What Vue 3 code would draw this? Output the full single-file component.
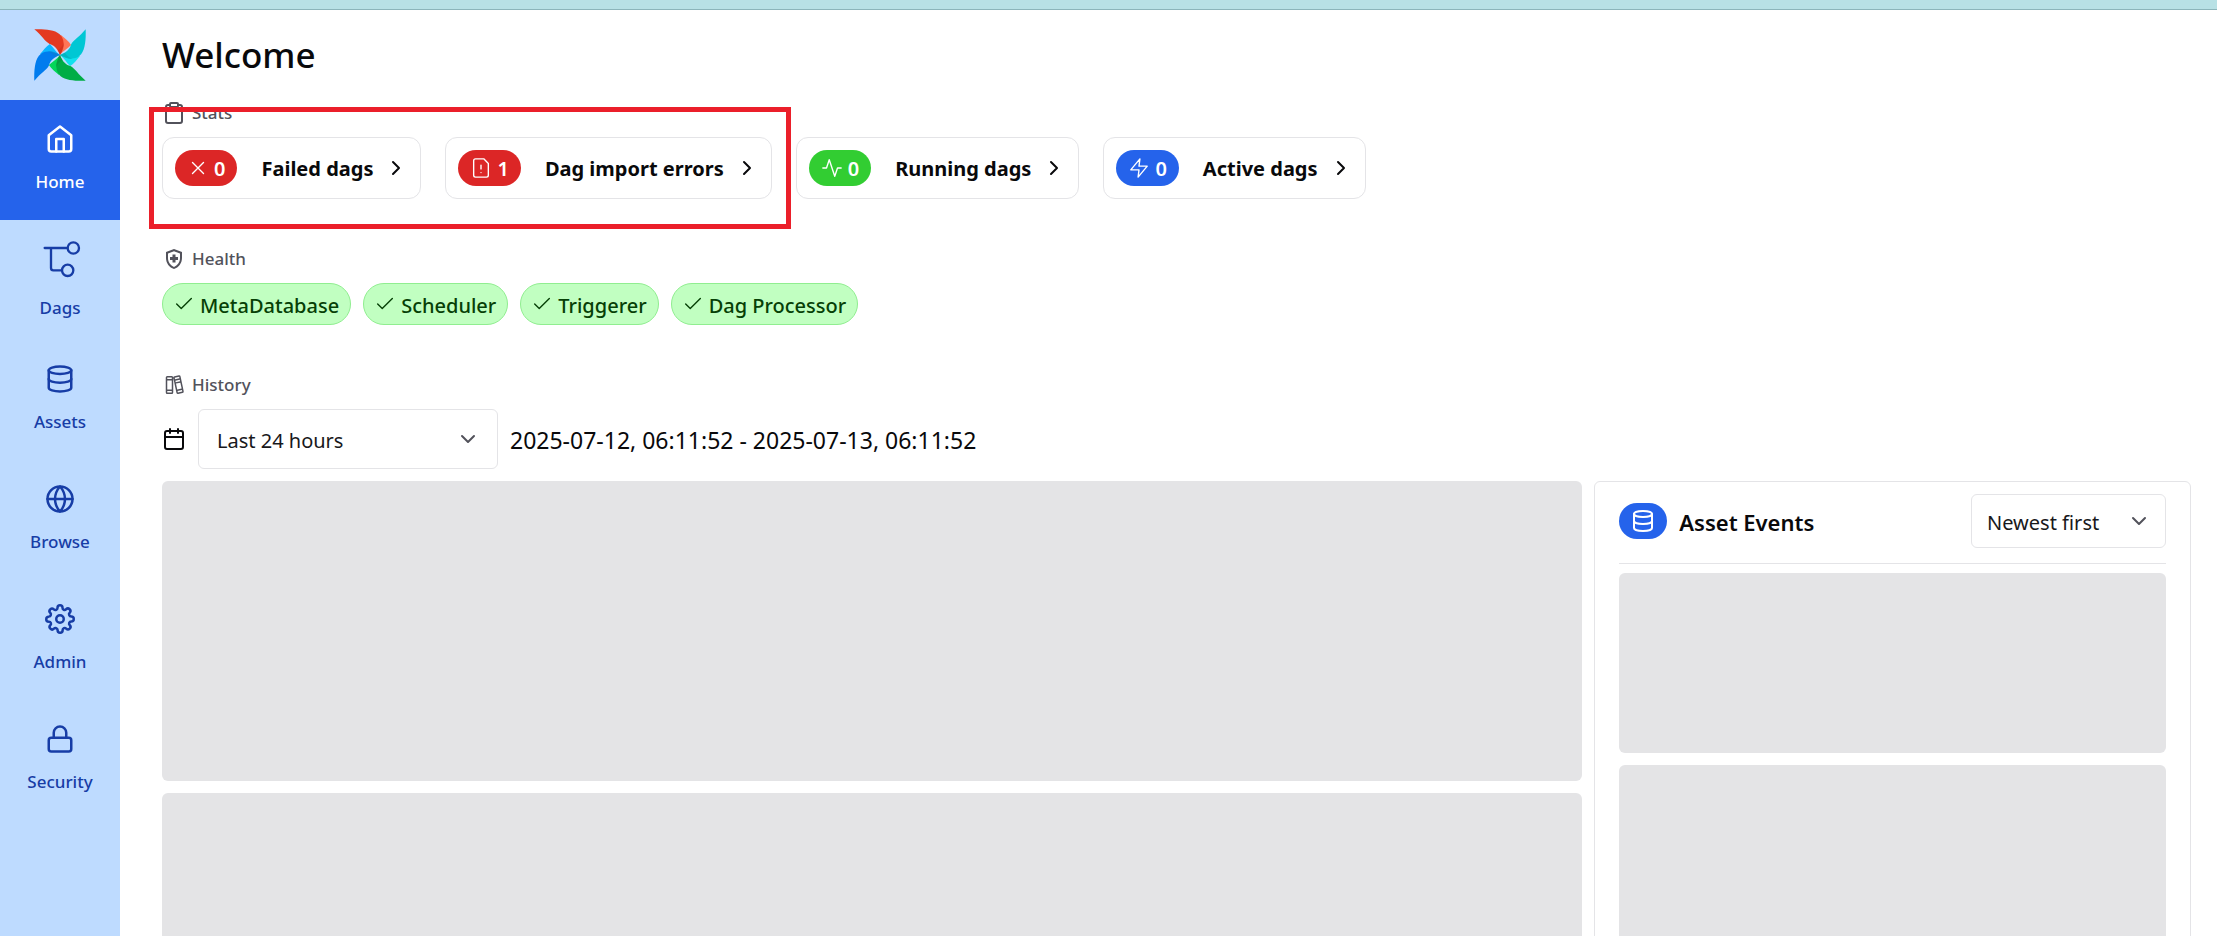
<script setup>
import { ref } from 'vue'

const icons = {
  home: '<path d="M3 9l9-7 9 7v11a2 2 0 0 1-2 2H5a2 2 0 0 1-2-2z"/><path d="M9 22V12h6v10"/>',
  database: '<ellipse cx="12" cy="5" rx="9" ry="3"/><path d="M21 12c0 1.66-4 3-9 3s-9-1.34-9-3"/><path d="M3 5v14c0 1.66 4 3 9 3s9-1.34 9-3V5"/>',
  globe: '<circle cx="12" cy="12" r="10"/><path d="M2 12h20"/><path d="M12 2a15.3 15.3 0 0 1 4 10 15.3 15.3 0 0 1-4 10 15.3 15.3 0 0 1-4-10 15.3 15.3 0 0 1 4-10z"/>',
  settings: '<circle cx="12" cy="12" r="3"/><path d="M19.4 15a1.65 1.65 0 0 0 .33 1.82l.06.06a2 2 0 0 1-2.83 2.83l-.06-.06a1.65 1.65 0 0 0-2.8 1.17V21a2 2 0 0 1-4 0v-.09A1.65 1.65 0 0 0 9 19.4a1.65 1.65 0 0 0-1.82.33l-.06.06a2 2 0 0 1-2.83-2.83l.06-.06a1.65 1.65 0 0 0-1.17-2.8H3a2 2 0 0 1 0-4h.09A1.65 1.65 0 0 0 4.6 9a1.65 1.65 0 0 0-.33-1.82l-.06-.06a2 2 0 0 1 2.83-2.83l.06.06A1.65 1.65 0 0 0 9 4.68a1.65 1.65 0 0 0 1-1.51V3a2 2 0 0 1 4 0v.09a1.65 1.65 0 0 0 2.82 1.17l.06-.06a2 2 0 0 1 2.83 2.83l-.06.06A1.65 1.65 0 0 0 19.4 9a1.65 1.65 0 0 0 1.51 1H21a2 2 0 0 1 0 4h-.09a1.65 1.65 0 0 0-1.51 1z"/>',
  lock: '<rect x="3" y="11" width="18" height="11" rx="2"/><path d="M7 11V7a5 5 0 0 1 10 0v4"/>',
  x: '<path d="M18 6L6 18M6 6l12 12"/>',
  fileWarning: '<path d="M15 2H6a2 2 0 0 0-2 2v16a2 2 0 0 0 2 2h12a2 2 0 0 0 2-2V7Z"/><path d="M12 9v4M12 17h.01"/>',
  activity: '<path d="M22 12h-4l-3 9L9 3l-3 9H2"/>',
  zap: '<path d="M13 2L3 14h9l-1 8 10-12h-9l1-8z"/>',
}

const dagsIcon = '<path d="M135 85H203M154 85V145Q154 152 161 152H187"/><circle cx="221" cy="85" r="17"/><circle cx="204" cy="152" r="17"/>'

const nav = [
  { label: 'Home', icon: 'home', active: true },
  { label: 'Dags', icon: 'dags' },
  { label: 'Assets', icon: 'database' },
  { label: 'Browse', icon: 'globe' },
  { label: 'Admin', icon: 'settings' },
  { label: 'Security', icon: 'lock' },
]

const statGroups = [
  {
    marked: true,
    items: [
      { label: 'Failed dags', count: 0, icon: 'x', tone: 'red' },
      { label: 'Dag import errors', count: 1, icon: 'fileWarning', tone: 'red' },
    ],
  },
  {
    marked: false,
    items: [
      { label: 'Running dags', count: 0, icon: 'activity', tone: 'green' },
      { label: 'Active dags', count: 0, icon: 'zap', tone: 'blue' },
    ],
  },
]

const health = ['MetaDatabase', 'Scheduler', 'Triggerer', 'Dag Processor']

const blades = [
  { turn: 0, main: '#e43921', light: '#ff7557', fold: '#c8301f' },
  { turn: 90, main: '#00c7d4', light: '#11e1ee', fold: '#05a5b0' },
  { turn: 180, main: '#00ad46', light: '#04d659', fold: '#0a8f3c' },
  { turn: 270, main: '#017cee', light: '#0cb6ff', fold: '#0d7fcd' },
]

const range = ref('Last 24 hours')
const order = ref('Newest first')
</script>

<template>
  <div class="page">
    <div class="strip"></div>
    <div class="shell">
      <nav class="sidebar" aria-label="Main">
        <a class="logo" href="#" aria-label="Airflow">
          <svg viewBox="0 0 160 160" width="52" height="52" aria-hidden="true">
            <g v-for="b in blades" :key="b.turn" :transform="`rotate(${b.turn} 80 80)`">
              <path :fill="b.light" d="M82 18C94 28 108 38 114 49C104 60 90 66 80 80Z" />
              <path :fill="b.main" d="M1 1C30 0 62 2 78 15C94 29 96 52 80 80C72 58 60 49 48 46C34 39 24 20 1 1Z" />
              <path :fill="b.fold" d="M92 42C93 55 88 67 80 80C78 74 76 69 73 65C82 60 88 51 92 42Z" opacity=".55" />
            </g>
          </svg>
        </a>
        <a
          v-for="item in nav"
          :key="item.label"
          href="#"
          class="nav-item"
          :class="{ active: item.active, branch: item.icon === 'dags' }"
        >
          <svg v-if="item.icon === 'dags'" class="dags-icon" viewBox="130 61 114 114" aria-hidden="true" v-html="dagsIcon"></svg>
          <svg v-else class="nav-icon" viewBox="0 0 24 24" aria-hidden="true" v-html="icons[item.icon]"></svg>
          <span>{{ item.label }}</span>
        </a>
      </nav>

      <main class="main">
        <h1>Welcome</h1>

        <section>
          <h2>
            <svg class="icon" viewBox="0 0 24 24" aria-hidden="true">
              <path d="M16 4h2a2 2 0 0 1 2 2v14a2 2 0 0 1-2 2H6a2 2 0 0 1-2-2V6a2 2 0 0 1 2-2h2" />
              <rect x="8" y="2" width="8" height="4" rx="1" />
            </svg>
            Stats
          </h2>
          <div class="stats">
            <div v-for="(group, i) in statGroups" :key="i" class="stat-group" :class="{ marked: group.marked }">
              <a v-for="s in group.items" :key="s.label" class="stat" href="#">
                <span class="badge" :class="s.tone">
                  <svg class="icon thin" viewBox="0 0 24 24" aria-hidden="true" v-html="icons[s.icon]"></svg>
                  {{ s.count }}
                </span>
                <span class="stat-label">{{ s.label }}</span>
                <svg class="icon" viewBox="0 0 24 24" aria-hidden="true"><path d="M9 18l6-6-6-6" /></svg>
              </a>
            </div>
          </div>
        </section>

        <section>
          <h2>
            <svg class="icon solid" viewBox="0 0 24 24" aria-hidden="true">
              <path d="M10.500 13H8v-3h2.500V7.500h3V10H16v3h-2.500v2.500h-3V13zM12 2 4 5v6.090c0 5.050 3.410 9.760 8 10.910 4.590-1.150 8-5.860 8-10.910V5l-8-3zm6 9.090c0 4-2.550 7.700-6 8.830-3.450-1.130-6-4.820-6-8.830v-4.700l6-2.250 6 2.250v4.700z" />
            </svg>
            Health
          </h2>
          <div class="chips">
            <button v-for="h in health" :key="h" type="button" class="chip">
              <svg class="icon thin" viewBox="0 0 24 24" aria-hidden="true"><path d="M20 6L9 17l-5-5" /></svg>
              <span>{{ h }}</span>
            </button>
          </div>
        </section>

        <section>
          <h2>
            <svg class="icon solid" viewBox="0 0 256 256" aria-hidden="true">
              <path d="M231.65,194.55,198.46,36.75a16,16,0,0,0-19-12.39L132.65,34.42a16.08,16.08,0,0,0-12.3,19l33.19,157.8A16,16,0,0,0,169.16,224a16.25,16.25,0,0,0,3.38-.36l46.81-10.06A16.09,16.09,0,0,0,231.65,194.55ZM136,50.15c0-.06,0-.09,0-.09l46.8-10,3.33,15.87L139.33,66Zm6.62,31.47,46.82-10.05,3.34,15.9L146,97.53Zm6.64,31.57,46.82-10.06,13.3,63.24-46.82,10.06ZM216,197.94l-46.8,10-3.33-15.87L212.67,182,216,197.85C216,197.91,216,197.94,216,197.94ZM104,32H56A16,16,0,0,0,40,48V208a16,16,0,0,0,16,16h48a16,16,0,0,0,16-16V48A16,16,0,0,0,104,32ZM56,48h48V64H56Zm0,32h48v96H56Zm48,128H56V192h48v16Z" />
            </svg>
            History
          </h2>
          <div class="range">
            <svg class="icon" viewBox="0 0 24 24" aria-hidden="true">
              <rect x="3" y="4" width="18" height="18" rx="2" />
              <path d="M16 2v4M8 2v4M3 10h18" />
            </svg>
            <div class="select range-select">
              <select v-model="range" aria-label="Time range">
                <option>Last 24 hours</option>
                <option>Last 7 days</option>
              </select>
              <svg class="icon" viewBox="0 0 24 24" aria-hidden="true"><path d="M6 9l6 6 6-6" /></svg>
            </div>
            <span class="dates">2025-07-12, 06:11:52 - 2025-07-13, 06:11:52</span>
          </div>
        </section>

        <div class="columns">
          <div class="runs">
            <div class="skeleton tall"></div>
            <div class="skeleton tall"></div>
          </div>
          <section class="events">
            <header>
              <span class="badge blue">
                <svg class="icon" viewBox="0 0 24 24" aria-hidden="true" v-html="icons.database"></svg>
              </span>
              <h3>Asset Events</h3>
              <div class="select order-select">
                <select v-model="order" aria-label="Sort order">
                  <option>Newest first</option>
                  <option>Oldest first</option>
                </select>
                <svg class="icon" viewBox="0 0 24 24" aria-hidden="true"><path d="M6 9l6 6 6-6" /></svg>
              </div>
            </header>
            <div class="skeleton"></div>
            <div class="skeleton"></div>
          </section>
        </div>
      </main>
    </div>
  </div>
</template>

<style>
body {
  background: #fff;
}
</style>

<style scoped>
* {
  box-sizing: border-box;
}
.page {
  height: 100vh;
  display: flex;
  flex-direction: column;
  overflow: hidden;
  font-family: "Noto Sans", "Open Sans", sans-serif;
  color: #09090b;
}
.strip {
  flex: none;
  height: 10px;
  background: #b8e1e5;
  border-bottom: 1px solid #8cb5ba;
}
.shell {
  flex: 1;
  min-height: 0;
  display: flex;
}
a {
  color: inherit;
  text-decoration: none;
}
svg {
  flex: none;
  display: block;
}
.icon,
.nav-icon,
.dags-icon {
  fill: none;
  stroke: currentColor;
  stroke-width: 2;
  stroke-linecap: round;
  stroke-linejoin: round;
}
.icon {
  width: 24px;
  height: 24px;
}
.icon.thin {
  width: 22px;
  height: 22px;
  stroke-width: 1.5;
}
.icon.solid {
  fill: currentColor;
  stroke: none;
}

.sidebar {
  flex: none;
  width: 120px;
  background: #bedbff;
  color: #173da6;
}
.logo {
  height: 90px;
  display: flex;
  align-items: center;
  justify-content: center;
}
.nav-item {
  height: 120px;
  padding-top: 24px;
  display: flex;
  flex-direction: column;
  align-items: center;
  gap: 16px;
  font-size: 17px;
  line-height: 24px;
  font-weight: 500;
}
.nav-item.active {
  background: #2563eb;
  color: #fff;
}
.nav-item.branch {
  padding-top: 20px;
  gap: 18px;
}
.nav-icon {
  width: 30px;
  height: 30px;
}
.dags-icon {
  width: 38px;
  height: 38px;
  margin-left: 4px;
  stroke-width: 7;
}

.main {
  flex: 1;
  min-width: 0;
  padding: 23px 26px 0 42px;
}
h1 {
  margin: 0 0 24px;
  font-size: 35px;
  line-height: 44px;
  font-weight: 500;
}
h2 {
  margin: 0 0 12px;
  display: flex;
  align-items: center;
  gap: 6px;
  font-size: 17px;
  line-height: 24px;
  font-weight: 500;
  color: #52525b;
}
section + section {
  margin-top: 48px;
}
.stats,
.stat-group {
  display: flex;
  gap: 24px;
}
.stat-group {
  position: relative;
}
.stat-group.marked::after {
  content: "";
  position: absolute;
  inset: -30px -19px -30px -13px;
  border: 5px solid #eb1f2a;
  pointer-events: none;
}
.stat {
  display: flex;
  align-items: center;
  padding: 12px;
  border: 1px solid #e4e4e7;
  border-radius: 12px;
}
.stat-label {
  margin: 0 11px 0 24px;
  padding-top: 2px;
  font-size: 20px;
  line-height: 30px;
  font-weight: 700;
  white-space: nowrap;
}
.badge {
  height: 36px;
  padding: 0 12px;
  display: flex;
  align-items: center;
  gap: 5px;
  border-radius: 18px;
  color: #fff;
  font-size: 20px;
  font-weight: 600;
}
.red {
  background: #dc2626;
}
.green {
  background: #32cd32;
}
.blue {
  background: #2563eb;
}

.chips {
  display: flex;
  gap: 12px;
}
.chip {
  height: 42px;
  padding: 0 11px 0 10px;
  display: flex;
  align-items: center;
  gap: 5px;
  border: 1px solid #90ee90;
  border-radius: 21px;
  background: #c1ffc1;
  color: #064006;
  font: inherit;
  font-size: 20px;
  font-weight: 500;
}
.chip span {
  padding-top: 2px;
}

.range {
  display: flex;
  align-items: center;
  gap: 12px;
}
.select {
  position: relative;
}
.select select {
  width: 100%;
  height: 100%;
  padding: 2px 18px 0;
  appearance: none;
  border: 1px solid #e4e4e7;
  border-radius: 6px;
  background: #fff;
  color: #18181b;
  font: inherit;
  font-size: 20px;
}
.select .icon {
  position: absolute;
  right: 18px;
  top: 50%;
  margin-top: -12px;
  color: #52525b;
  pointer-events: none;
}
.range-select {
  width: 300px;
  height: 60px;
}
.dates {
  padding-top: 2px;
  font-size: 23px;
  line-height: 36px;
}

.columns {
  margin-top: 12px;
  display: flex;
  gap: 12px;
}
.runs {
  width: 70%;
}
.runs,
.events {
  display: flex;
  flex-direction: column;
  gap: 12px;
}
.events {
  flex: 1;
  min-width: 0;
  padding: 12px 24px;
  border: 1px solid #e4e4e7;
  border-radius: 6px;
}
.events header {
  display: flex;
  align-items: center;
  gap: 12px;
  padding-bottom: 15px;
  margin-bottom: -3px;
  border-bottom: 1px solid #e4e4e7;
}
h3 {
  margin: 0;
  padding-top: 2px;
  flex: 1;
  font-size: 22px;
  line-height: 30px;
  font-weight: 600;
}
.order-select {
  width: 195px;
  height: 54px;
}
.order-select select {
  padding: 2px 15px 0;
}
.order-select .icon {
  right: 15px;
}
.skeleton {
  flex: none;
  height: 180px;
  border-radius: 6px;
  background: #e4e4e6;
}
.skeleton.tall {
  height: 300px;
}
</style>
